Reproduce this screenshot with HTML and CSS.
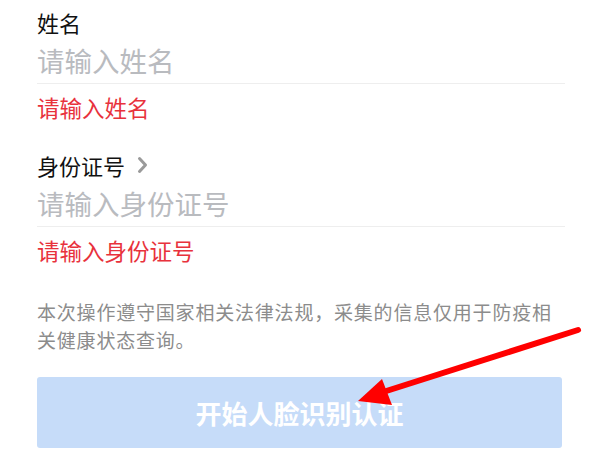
FILE: index.html
```html
<!DOCTYPE html>
<html lang="zh-CN">
<head>
<meta charset="utf-8">
<title>人脸识别认证</title>
<link rel="stylesheet" href="styles.css">
</head>
<body>
<div class="page">
  <div class="field">
    <div class="label">姓名</div>
    <div class="input">请输入姓名</div>
    <div class="error">请输入姓名</div>
  </div>
  <div class="field field-second">
    <div class="label">身份证号<svg class="chev" width="11" height="18" viewBox="0 0 11 18"><path d="M2.5 2.5 L8.5 9 L2.5 15.5" fill="none" stroke="#9a9a9a" stroke-width="3" stroke-linecap="round" stroke-linejoin="round"/></svg></div>
    <div class="input">请输入身份证号</div>
    <div class="error">请输入身份证号</div>
  </div>
  <p class="notice">本次操作遵守国家相关法律法规，采集的信息仅用于防疫相关健康状态查询。</p>
  <div class="btn">开始人脸识别认证</div>
  <svg class="arrow" width="600" height="450" viewBox="0 0 600 450">
    <line x1="578" y1="330" x2="380" y2="393" stroke="#ff0000" stroke-width="6" stroke-linecap="round"/>
    <polygon points="358,401 382,379 392,405" fill="#ff0000"/>
  </svg>
</div>
</body>
</html>
```
FILE: styles.css
```css
html, body {
  margin: 0;
  padding: 0;
  background: #ffffff;
}
.page {
  position: relative;
  width: 600px;
  height: 450px;
  overflow: hidden;
  padding: 7px 35px 0 37px;
  box-sizing: border-box;
  font-family: "Noto Sans CJK SC", "Noto Sans", sans-serif;
}
.field-second {
  margin-top: 28px;
}
.label {
  display: flex;
  align-items: center;
  font-size: 22px;
  line-height: 30px;
  color: #111111;
}
.chev {
  margin-left: 12px;
}
.input {
  margin-top: 5px;
  font-size: 27.5px;
  line-height: 36px;
  color: #b9bbbf;
  padding-bottom: 5px;
  border-bottom: 1px solid #eeeeee;
}
.error {
  margin-top: 8px;
  font-size: 22.5px;
  line-height: 30px;
  color: #e8323c;
}
.notice {
  margin: 33px 0 0 0;
  font-size: 19px;
  line-height: 28px;
  letter-spacing: 0.8px;
  color: #8c8c8c;
}
.btn {
  margin-top: 23px;
  height: 71px;
  margin-right: 3px;
  background: #c6dcf9;
  border-radius: 3px;
  display: flex;
  align-items: center;
  justify-content: center;
  color: #ffffff;
  font-size: 26px;
  font-weight: bold;
}
.arrow {
  position: absolute;
  left: 0;
  top: 0;
  pointer-events: none;
}
```
